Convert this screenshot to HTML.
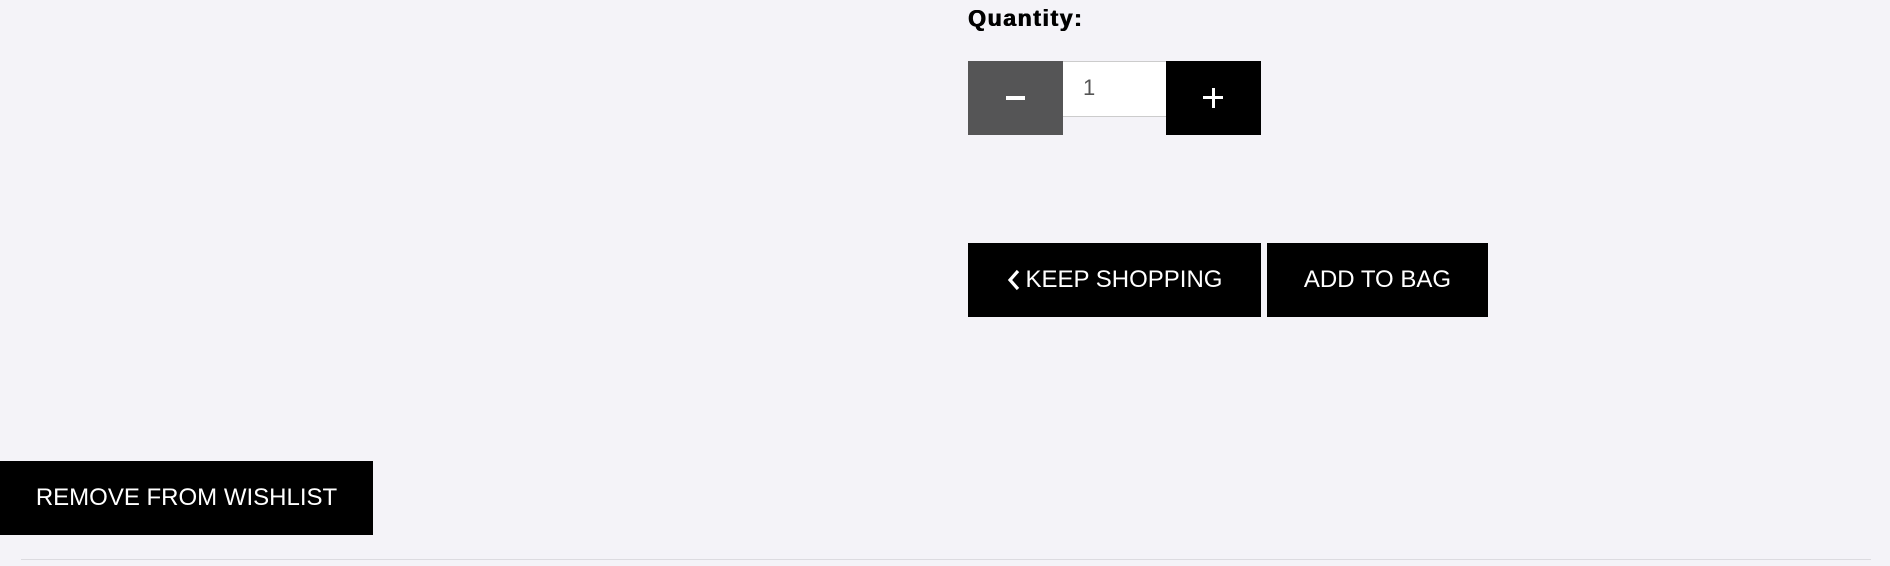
<!DOCTYPE html>
<html><head><style>
html,body{margin:0;padding:0;width:1890px;height:566px;background:#f4f3f8;overflow:hidden;font-family:"Liberation Sans",Arial,sans-serif;position:relative}
.a{position:absolute;box-sizing:border-box}
.btn{background:#000;color:#fff;display:flex;align-items:center;justify-content:center;font-size:24px}
</style></head><body>
<div class="a" style="left:968px;top:5px;font-size:23px;font-weight:bold;color:#000;letter-spacing:1.6px;text-shadow:0.6px 0 0 #000,-0.3px 0 0 #000">Quantity:</div>
<div class="a" style="left:968px;top:61px;width:95px;height:74px;background:#555556"><div class="a" style="left:38px;top:35px;width:19px;height:4px;background:#fff"></div></div>
<div class="a" style="left:1063px;top:61px;width:103px;height:56px;background:#fff;border-top:1px solid #ccc;border-bottom:1px solid #ccc;font-size:22px;color:#555;padding:13px 0 0 20px">1</div>
<div class="a" style="left:1166px;top:61px;width:95px;height:74px;background:#000"><div class="a" style="left:37px;top:35px;width:20px;height:3px;background:#fff"></div><div class="a" style="left:45.5px;top:27px;width:3px;height:20px;background:#fff"></div></div>
<div class="a btn" style="left:968px;top:243px;width:293px;height:74px"><svg width="14" height="22" viewBox="0 0 14 22" style="margin-right:5px"><path d="M11 2 L3 11 L11 20" stroke="#fff" stroke-width="3.2" fill="none"/></svg>KEEP SHOPPING</div>
<div class="a btn" style="left:1267px;top:243px;width:221px;height:74px">ADD TO BAG</div>
<div class="a btn" style="left:0;top:461px;width:373px;height:74px;font-size:24px">REMOVE FROM WISHLIST</div>
<div class="a" style="left:21px;top:559px;width:1850px;height:1px;background:#dcdbe0"></div>
</body></html>
